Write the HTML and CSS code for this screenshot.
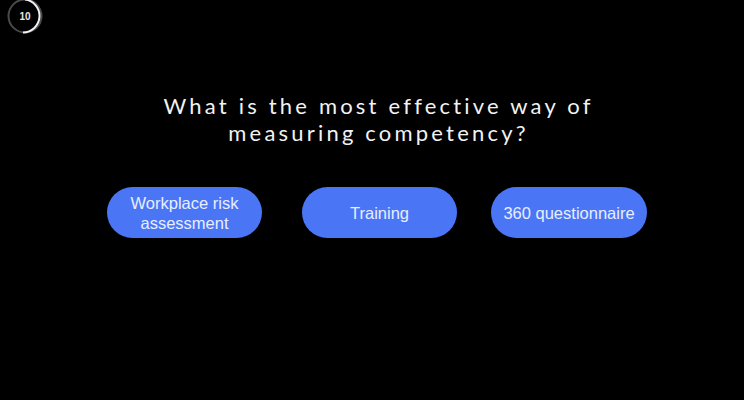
FILE: index.html
```html
<!DOCTYPE html>
<html>
<head>
<meta charset="utf-8">
<link rel="stylesheet" href="styles.css">
</head>
<body>
<div class="page">
  <div class="timer">
    <svg class="ring" width="38" height="38" viewBox="0 0 38 38">
      <circle cx="19" cy="19" r="16.5" fill="none" stroke="#4a4a4a" stroke-width="2"/>
      <path d="M19 2.5 A16.5 16.5 0 0 1 17 35.38" fill="none" stroke="#f2f2f2" stroke-width="2"/>
    </svg>
    <span class="count">10</span>
  </div>
  <h1 class="question">What is the most effective way of<br>measuring competency?</h1>
  <div class="options">
    <div class="option">Workplace risk<br>assessment</div>
    <div class="option second">Training</div>
    <div class="option third">360 questionnaire</div>
  </div>
</div>
</body>
</html>
```

FILE: styles.css
```css
html, body {
  margin: 0;
  padding: 0;
  background: #000;
}
.page {
  width: 744px;
  height: 400px;
  position: relative;
  background: #000;
  overflow: hidden;
}
.timer {
  position: absolute;
  left: 6px;
  top: -3px;
  width: 38px;
  height: 38px;
}
.ring {
  position: absolute;
  left: 0;
  top: 0;
}
.count {
  position: absolute;
  left: 0;
  top: 0;
  width: 38px;
  height: 38px;
  display: flex;
  align-items: center;
  justify-content: center;
  color: #e6e6e6;
  font-family: "Liberation Sans", Arial, sans-serif;
  font-size: 10px;
  font-weight: bold;
}
.question {
  margin: 0;
  padding-top: 92px;
  padding-left: 13px;
  text-align: center;
  color: #f2f2f2;
  font-family: Lato, "Noto Sans", sans-serif;
  font-weight: 400;
  font-size: 22px;
  line-height: 27px;
  letter-spacing: 3.2px;
}
.options {
  display: flex;
  padding-left: 107px;
  margin-top: 41px;
}
.option {
  width: 155px;
  height: 51px;
  border-radius: 26px;
  background: #4a76f6;
  color: #e8eeff;
  font-family: "Liberation Sans", Arial, sans-serif;
  font-size: 16.5px;
  line-height: 20px;
  padding-top: 1px;
  box-sizing: border-box;
  display: flex;
  align-items: center;
  justify-content: center;
  text-align: center;
}
.second {
  margin-left: 40px;
}
.third {
  margin-left: 34px;
  width: 156px;
}
```
